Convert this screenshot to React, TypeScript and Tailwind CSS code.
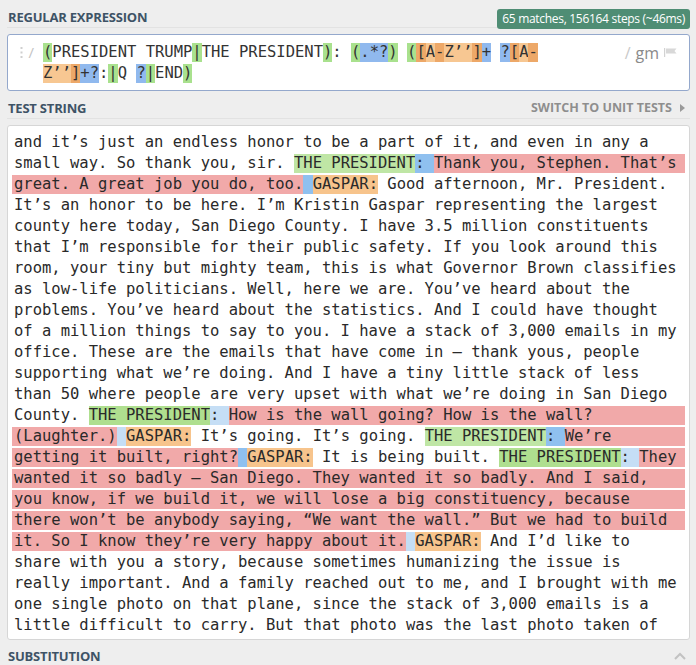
import React from "react";

type Tone = "n" | "gA" | "gB" | "bA" | "bB" | "r" | "o";
type Line = { pre?: boolean; fill?: boolean; segs: [Tone, string][] };

const toneBg: Record<Tone, string> = {
  n: "",
  gA: "bg-[#bfe6a5]",
  gB: "bg-[#afdf8f]",
  bA: "bg-[#8fc0ef]",
  bB: "bg-[#c5def5]",
  r: "bg-[#f1a9a9]",
  o: "bg-[#f7c48c]",
};

const testLines: Line[] = [
  { segs: [["n", "and it’s just an endless honor to be a part of it, and even in any a"]] },
  {
    fill: true,
    segs: [
      ["n", "small way. So thank you, sir. "],
      ["gA", "THE PRESIDENT"],
      ["bA", ": "],
      ["r", "Thank you, Stephen. That’s"],
    ],
  },
  {
    pre: true,
    segs: [
      ["r", "great. A great job you do, too."],
      ["bA", " "],
      ["o", "GASPAR:"],
      ["n", " Good afternoon, Mr. President."],
    ],
  },
  { segs: [["n", "It’s an honor to be here. I’m Kristin Gaspar representing the largest"]] },
  { segs: [["n", "county here today, San Diego County. I have 3.5 million constituents"]] },
  { segs: [["n", "that I’m responsible for their public safety. If you look around this"]] },
  { segs: [["n", "room, your tiny but mighty team, this is what Governor Brown classifies"]] },
  { segs: [["n", "as low-life politicians. Well, here we are. You’ve heard about the"]] },
  { segs: [["n", "problems. You’ve heard about the statistics. And I could have thought"]] },
  { segs: [["n", "of a million things to say to you. I have a stack of 3,000 emails in my"]] },
  { segs: [["n", "office. These are the emails that have come in – thank yous, people"]] },
  { segs: [["n", "supporting what we’re doing. And I have a tiny little stack of less"]] },
  { segs: [["n", "than 50 where people are very upset with what we’re doing in San Diego"]] },
  {
    fill: true,
    segs: [
      ["n", "County. "],
      ["gB", "THE PRESIDENT"],
      ["bB", ": "],
      ["r", "How is the wall going? How is the wall?"],
    ],
  },
  {
    pre: true,
    fill: true,
    segs: [
      ["r", "(Laughter.)"],
      ["bB", " "],
      ["o", "GASPAR:"],
      ["n", " It’s going. It’s going. "],
      ["gA", "THE PRESIDENT"],
      ["bA", ": "],
      ["r", "We’re"],
    ],
  },
  {
    pre: true,
    fill: true,
    segs: [
      ["r", "getting it built, right?"],
      ["bA", " "],
      ["o", "GASPAR:"],
      ["n", " It is being built. "],
      ["gB", "THE PRESIDENT"],
      ["bB", ": "],
      ["r", "They"],
    ],
  },
  { pre: true, fill: true, segs: [["r", "wanted it so badly – San Diego. They wanted it so badly. And I said,"]] },
  { pre: true, fill: true, segs: [["r", "you know, if we build it, we will lose a big constituency, because"]] },
  { pre: true, fill: true, segs: [["r", "there won’t be anybody saying, “We want the wall.” But we had to build"]] },
  {
    pre: true,
    segs: [
      ["r", "it. So I know they’re very happy about it."],
      ["bB", " "],
      ["o", "GASPAR:"],
      ["n", " And I’d like to"],
    ],
  },
  { segs: [["n", "share with you a story, because sometimes humanizing the issue is"]] },
  { segs: [["n", "really important. And a family reached out to me, and I brought with me"]] },
  { segs: [["n", "one single photo on that plane, since the stack of 3,000 emails is a"]] },
  { segs: [["n", "little difficult to carry. But that photo was the last photo taken of"]] },
];

type RxTone = "p" | "g" | "b" | "o" | "O";
const rxBg: Record<RxTone, string> = {
  p: "",
  g: "bg-[#a9e18e]",
  b: "bg-[#90b9ee]",
  o: "bg-[#f7c792]",
  O: "bg-[#eda868]",
};

const regexLines: [RxTone, string][][] = [
  [
    ["g", "("],
    ["p", "PRESIDENT TRUMP"],
    ["g", "|"],
    ["p", "THE PRESIDENT"],
    ["g", ")"],
    ["p", ": "],
    ["g", "("],
    ["b", ".*?"],
    ["g", ")"],
    ["p", " "],
    ["g", "("],
    ["O", "["],
    ["o", "A"],
    ["O", "-"],
    ["o", "Z’’"],
    ["O", "]"],
    ["b", "+"],
    ["p", " "],
    ["b", "?"],
    ["O", "["],
    ["o", "A"],
    ["O", "-"],
  ],
  [
    ["o", "Z’’"],
    ["O", "]"],
    ["b", "+?"],
    ["p", ":"],
    ["g", "|"],
    ["p", "Q "],
    ["b", "?"],
    ["g", "|"],
    ["p", "END"],
    ["g", ")"],
  ],
];

const mono = "font-['DejaVu_Sans_Mono',monospace] text-[15.5px]";

function Heading({ children }: { children: React.ReactNode }) {
  return (
    <span className="text-[13px] font-bold leading-[18px] tracking-[-0.2px] text-[#3e5366]">
      {children}
    </span>
  );
}

function TestLine({ line }: { line: Line }) {
  return (
    <div className="flex h-[21px] items-center pr-[4px]">
      <span className="w-[4px] shrink-0" />
      <span className={`h-[19px] w-[2px] shrink-0 ${line.pre ? toneBg.r : ""}`} />
      {line.segs.map(([tone, text], i) => (
        <span key={i} className={`h-[19px] whitespace-pre leading-[19px] ${toneBg[tone]}`}>
          {text}
        </span>
      ))}
      {line.fill && <span className={`h-[19px] flex-1 ${toneBg.r}`} />}
    </div>
  );
}

export default function App() {
  return (
    <div className="h-[665px] overflow-hidden bg-[#eeeeee] pl-[7px] pr-[6px] font-['Open_Sans',sans-serif]">
      {/* regular expression */}
      <div className="flex h-[28px] justify-between border-b border-[#e2e2e2] pl-[1px]">
        <div className="pt-[4px]">
          <Heading>REGULAR EXPRESSION</Heading>
        </div>
        <div className="relative z-10 mt-[9px] flex h-[20px] items-center rounded-[3px] bg-[#4f8d74] px-[5px] text-[12px] tracking-[-0.3px] text-white">
          65 matches, 156164 steps (~46ms)
        </div>
      </div>

      <div className="mt-[6px] flex h-[57px] rounded-[3px] border border-[#94a8cc] bg-white pt-[7px]">
        <div className="flex h-[21px] w-[35px] shrink-0 items-center justify-end gap-[5px] pr-[9px]">
          <svg width="3" height="11" viewBox="0 0 3 11">
            <rect x="0.5" y="0" width="2" height="2" fill="#cfcfcf" />
            <rect x="0.5" y="4.5" width="2" height="2" fill="#cfcfcf" />
            <rect x="0.5" y="9" width="2" height="2" fill="#cfcfcf" />
          </svg>
          <span className="text-[15px] leading-none text-[#c4c4c4]">/</span>
        </div>
        <div className={`flex-1 text-[#333] ${mono}`}>
          {regexLines.map((segs, li) => (
            <div key={li} className="flex h-[21px] items-center">
              {segs.map(([tone, text], i) => (
                <span key={i} className={`h-[19px] whitespace-pre leading-[19px] ${rxBg[tone]}`}>
                  {text}
                </span>
              ))}
            </div>
          ))}
        </div>
        <div className="flex h-[21px] items-center gap-[5px] pr-[12px]">
          <span className="text-[16px] leading-none text-[#c9c9c9]">/</span>
          <span className="text-[16px] leading-none text-[#8a8a8a]">gm</span>
          <svg width="13" height="9" viewBox="0 0 13 9">
            <rect x="0" y="0" width="1.2" height="9" fill="#d2d2d2" />
            <path d="M2 0.5 H12.5 L10.5 3 L12.5 5.5 H2 Z" fill="#d8d8d8" />
          </svg>
        </div>
      </div>

      {/* test string */}
      <div className="flex h-[28px] items-center justify-between border-b border-[#e2e2e2] pl-[1px] pt-[7px]">
        <Heading>TEST STRING</Heading>
        <div className="flex items-center gap-[8px] pr-[5px] text-[12.5px] font-bold text-[#8e8e8e]">
          <span>SWITCH TO UNIT TESTS</span>
          <svg width="5" height="8" viewBox="0 0 5 8">
            <path d="M0 0 L5 4 L0 8 Z" fill="#9a9a9a" />
          </svg>
        </div>
      </div>

      <div
        className={`mt-[6px] h-[515px] overflow-hidden rounded-[3px] border border-[#d6d6d6] bg-white pt-[6px] text-[#2a2a2a] ${mono}`}
      >
        {testLines.map((line, i) => (
          <TestLine key={i} line={line} />
        ))}
      </div>

      {/* substitution */}
      <div className="mt-[9px] flex h-[14px] items-center justify-between pl-[1px]">
        <Heading>SUBSTITUTION</Heading>
        <svg width="12" height="8" viewBox="0 0 12 8" className="mr-[4px]">
          <path d="M1 7 L6 2 L11 7" fill="none" stroke="#c2c2c2" strokeWidth="2" />
        </svg>
      </div>
    </div>
  );
}
